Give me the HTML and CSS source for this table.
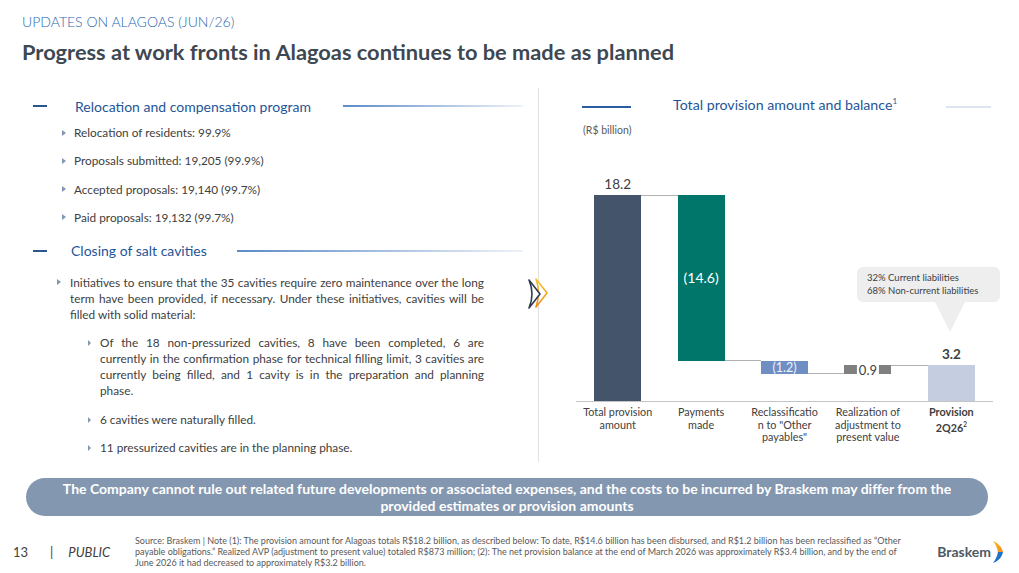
FILE: index.html
```html
<!DOCTYPE html>
<html lang="en">
<head>
<meta charset="utf-8">
<title>Updates on Alagoas</title>
<link rel="stylesheet" href="styles.css">
</head>
<body>
<div class="slide">
  <header class="head">
    <div class="kicker">UPDATES ON ALAGOAS (JUN/26)</div>
    <h1 class="title">Progress at work fronts in Alagoas continues to be made as planned</h1>
  </header>

  <main class="content">
    <section class="left">
      <div class="sec-head">
        <span class="dash"></span>
        <h2 class="sec-title">Relocation and compensation program</h2>
        <span class="rule"></span>
      </div>
      <ul class="bullets">
        <li>Relocation of residents: 99.9%</li>
        <li>Proposals submitted: 19,205 (99.9%)</li>
        <li>Accepted proposals: 19,140 (99.7%)</li>
        <li>Paid proposals: 19,132 (99.7%)</li>
      </ul>

      <div class="sec-head sec-head--second">
        <span class="dash"></span>
        <h2 class="sec-title">Closing of salt cavities</h2>
        <span class="rule"></span>
      </div>
      <ul class="cavities">
        <li class="cav-main">Initiatives to ensure that the 35 cavities require zero maintenance over the long term have been provided, if necessary. Under these initiatives, cavities will be filled with solid material:
          <ul class="sub">
            <li>Of the 18 non-pressurized cavities, 8 have been completed, 6 are currently in the confirmation phase for technical filling limit, 3 cavities are currently being filled, and 1 cavity is in the preparation and planning phase.</li>
            <li>6 cavities were naturally filled.</li>
            <li>11 pressurized cavities are in the planning phase.</li>
          </ul>
        </li>
      </ul>
    </section>

    <div class="divider">
      <svg class="chev" viewBox="0 0 22 32" width="22" height="32" aria-hidden="true">
        <defs>
          <linearGradient id="og" x1="0" y1="0" x2="0" y2="1">
            <stop offset="0" stop-color="#f7c531"/>
            <stop offset="1" stop-color="#ef8a1f"/>
          </linearGradient>
        </defs>
        <path d="M9 2 L20 16 L9 30 Q14 16 9 2 Z" fill="#fff" stroke="url(#og)" stroke-width="1.6" stroke-linejoin="round"/>
        <path d="M2 3 L13 17 L2 31 Q8 17 2 3 Z" fill="#fff" stroke="#2f3b4c" stroke-width="1.6" stroke-linejoin="round"/>
      </svg>
    </div>

    <section class="right">
      <div class="chart-head">
        <span class="ch-line"></span>
        <h2 class="ch-title">Total provision amount and balance<sup>1</sup></h2>
        <span class="ch-line ch-line--light"></span>
      </div>
      <div class="unit">(R$ billion)</div>

      <div class="chart">
        <div class="plot">
          <div class="slot">
            <div class="bar bar-total" style="bottom:0;height:206px"><span class="val val-top">18.2</span></div>
            <div class="conn" style="bottom:205px"></div>
          </div>
          <div class="slot">
            <div class="bar bar-pay" style="bottom:40px;height:166px"><span class="val val-in val-white">(14.6)</span></div>
            <div class="conn" style="bottom:40px"></div>
          </div>
          <div class="slot">
            <div class="bar bar-recl" style="bottom:27px;height:13px"><span class="val val-in val-small">(1.2)</span></div>
            <div class="conn" style="bottom:27px"></div>
          </div>
          <div class="slot">
            <div class="bar bar-avp" style="bottom:27px;height:9px"><span class="val val-in val-boxed">0.9</span></div>
            <div class="conn" style="bottom:35px"></div>
          </div>
          <div class="slot">
            <div class="bar bar-prov" style="bottom:0;height:36px"><span class="val val-top val-bold">3.2</span></div>
          </div>
        </div>
        <div class="cats">
          <div class="cat">Total provision<br>amount</div>
          <div class="cat">Payments<br>made</div>
          <div class="cat">Reclassificatio<br>n to "Other<br>payables"</div>
          <div class="cat">Realization of<br>adjustment to<br>present value</div>
          <div class="cat cat-bold">Provision<br>2Q26<sup>2</sup></div>
        </div>
      </div>

      <div class="bubble">32% Current liabilities<br>68% Non-current liabilities</div>
    </section>
  </main>

  <div class="banner">The Company cannot rule out related future developments or associated expenses, and the costs to be incurred by Braskem may differ from the<br>provided estimates or provision amounts</div>

  <footer class="foot">
    <div class="page"><span>13</span><span class="sep">|</span><span class="public">PUBLIC</span></div>
    <p class="source">Source: Braskem | Note (1): The provision amount for Alagoas totals R$18.2 billion, as described below: To date, R$14.6 billion has been disbursed, and R$1.2 billion has been reclassified as “Other payable obligations.” Realized AVP (adjustment to present value) totaled R$873 million; (2): The net provision balance at the end of March 2026 was approximately R$3.4 billion, and by the end of June 2026 it had decreased to approximately R$3.2 billion.</p>
    <div class="logo">
      <span class="logo-word">Braskem</span>
      <svg class="logo-mark" viewBox="0 0 10 22" width="10" height="22" aria-hidden="true">
        <defs>
          <linearGradient id="lg" x1="0" y1="0" x2="1" y2="1">
            <stop offset="0" stop-color="#fbc02d"/>
            <stop offset="1" stop-color="#f08c1c"/>
          </linearGradient>
        </defs>
        <path d="M0 0 C5 2 9 6 10 11 L5 11 C4.2 7 2.5 3 0 0 Z" fill="url(#lg)"/>
        <path d="M10 11 C9 16 5.5 20 0 22 C2.5 19 4.2 15 5 11 Z" fill="#1e73c8"/>
      </svg>
    </div>
  </footer>
</div>
</body>
</html>
```

FILE: styles.css
```css
* { box-sizing: border-box; margin: 0; padding: 0; }
html, body { width: 1019px; height: 573px; overflow: hidden; background: #fff; }
body { font-family: Lato, "Liberation Sans", sans-serif; color: #404040; }

.slide { width: 1019px; height: 573px; display: flex; flex-direction: column; }

/* header */
.head { padding: 13px 0 0 22px; }
.kicker { font-size: 14px; line-height: 18px; font-weight: 300; color: #2a67b0; }
.title { margin-top: 8px; font-size: 21.8px; line-height: 26px; font-weight: 700; color: #3d4852; }

/* content */
.content { margin-top: 23px; height: 374px; display: flex; }

.left { width: 538px; padding: 8px 15px 0 33px; }
.sec-head { display: flex; align-items: center; height: 20px; }
.dash { width: 14px; height: 2.5px; background: #2b5590; flex: none; }
.sec-title { margin-left: 28px; font-size: 14px; font-weight: 400; color: #1f5597; white-space: nowrap; }
.rule { flex: 1; height: 2px; margin-left: 32px; background: linear-gradient(90deg, #5b8bc8, #eef2f8); }
.sec-head--second { margin-top: 15px; }
.sec-head--second .sec-title { margin-left: 24px; }
.sec-head--second .rule { margin-left: 30px; }

.bullets { list-style: none; margin-top: 9px; padding-left: 29px; display: flex; flex-direction: column; gap: 12.3px; }
.bullets li, .cavities li { position: relative; font-size: 11.8px; line-height: 16px; }
.bullets li { padding-left: 12px; }
.bullets li::before, .cav-main::before, .sub li::before {
  content: ""; position: absolute; left: 0; top: 4.5px;
  border-left: 4px solid #8497b0; border-top: 3.5px solid transparent; border-bottom: 3.5px solid transparent;
}

.cavities { list-style: none; margin-top: 14px; padding: 0 39px 0 24px; }
.cav-main { padding-left: 13px; line-height: 15px; text-align: justify; }
.cav-main::before { top: 4px; }
.sub { list-style: none; margin-top: 12.5px; margin-left: 18px; display: flex; flex-direction: column; gap: 12.5px; }
.sub li { padding-left: 12px; line-height: 16px; text-align: justify; }
.sub li::before { top: 5px; border-left-width: 3px; border-top-width: 3px; border-bottom-width: 3px; }

/* divider + chevron */
.divider { width: 1px; background: #e2e2e2; position: relative; flex: none; }
.chev { position: absolute; left: -11px; top: 189px; }

/* right */
.right { flex: 1; position: relative; padding-top: 6px; }
.chart-head { display: flex; align-items: center; height: 20px; padding-left: 43px; }
.ch-line { width: 49px; height: 2px; background: #2a5d9f; margin-top: 6px; flex: none; }
.ch-title { margin-left: 42px; font-size: 14.2px; font-weight: 400; color: #1f5597; white-space: nowrap; }
.ch-title sup { font-size: 8px; }
.ch-line--light { margin-left: 49px; width: 45px; background: #dce5f0; }
.unit { margin: 9px 0 0 44px; font-size: 10.5px; line-height: 14px; color: #595959; }

.chart { margin: 23px 0 0 37px; width: 417px; }
.plot { height: 242px; display: flex; border-bottom: 1px solid #c4c4c4; }
.slot { flex: 1; position: relative; }
.bar { position: absolute; left: calc(50% - 23.5px); width: 47px; }
.conn { position: absolute; left: calc(50% + 23.5px); width: calc(100% - 47px); height: 1px; background: #b0b0b0; }
.bar-total { background: #44546a; }
.bar-pay { background: #00766b; }
.bar-recl { background: #6f8fc3; }
.bar-avp { background: #808080; }
.bar-prov { background: #c5cde0; }

.val { position: absolute; left: 50%; transform: translateX(-50%); font-size: 13.5px; line-height: 16px; color: #404040; white-space: nowrap; }
.val-top { bottom: calc(100% + 3px); }
.val-in { top: 50%; transform: translate(-50%, -50%); }
.val-white { color: #fff; font-size: 14px; }
.val-small { color: #eef2fa; font-size: 12.5px; }
.val-boxed { background: #fff; padding: 0 2px; font-size: 13px; }
.val-bold { font-weight: 700; }

.cats { display: flex; margin-top: 4px; }
.cat { flex: 1; text-align: center; font-size: 10.8px; line-height: 12.5px; color: #404040; }
.cat-bold { font-weight: 700; }
.cat sup { font-size: 6.5px; }

.bubble {
  position: absolute; left: 318px; top: 179px; width: 143px; height: 35px;
  background: #eeeeee; border-radius: 6px; padding: 4px 10px;
  font-size: 9.5px; line-height: 13px; color: #404040;
}
.bubble::after {
  content: ""; position: absolute; left: 78px; top: 35px; width: 30px; height: 30px;
  background: #eeeeee; clip-path: polygon(0 0, 100% 0, 50% 100%);
}

/* banner */
.banner {
  margin: 16px 31px 0 26px; height: 38px; border-radius: 19px;
  background: #8497b0; color: #fff; font-weight: 700; font-size: 14px; line-height: 17px;
  display: flex; align-items: center; justify-content: center; text-align: center;
}

/* footer */
.foot { margin-top: 14px; height: 43px; display: flex; align-items: center; }
.page { width: 135px; padding-left: 13px; font-size: 13px; color: #404040; display: flex; }
.sep { margin-left: 22px; }
.public { margin-left: 15px; font-style: italic; }
.source { width: 775px; font-size: 9px; line-height: 11px; color: #595959; }
.logo { margin-left: auto; margin-right: 16px; display: flex; align-items: center; gap: 2px; }
.logo-word { font-size: 14px; font-weight: 700; color: #4d5966; }
.logo-mark { display: block; }
```
